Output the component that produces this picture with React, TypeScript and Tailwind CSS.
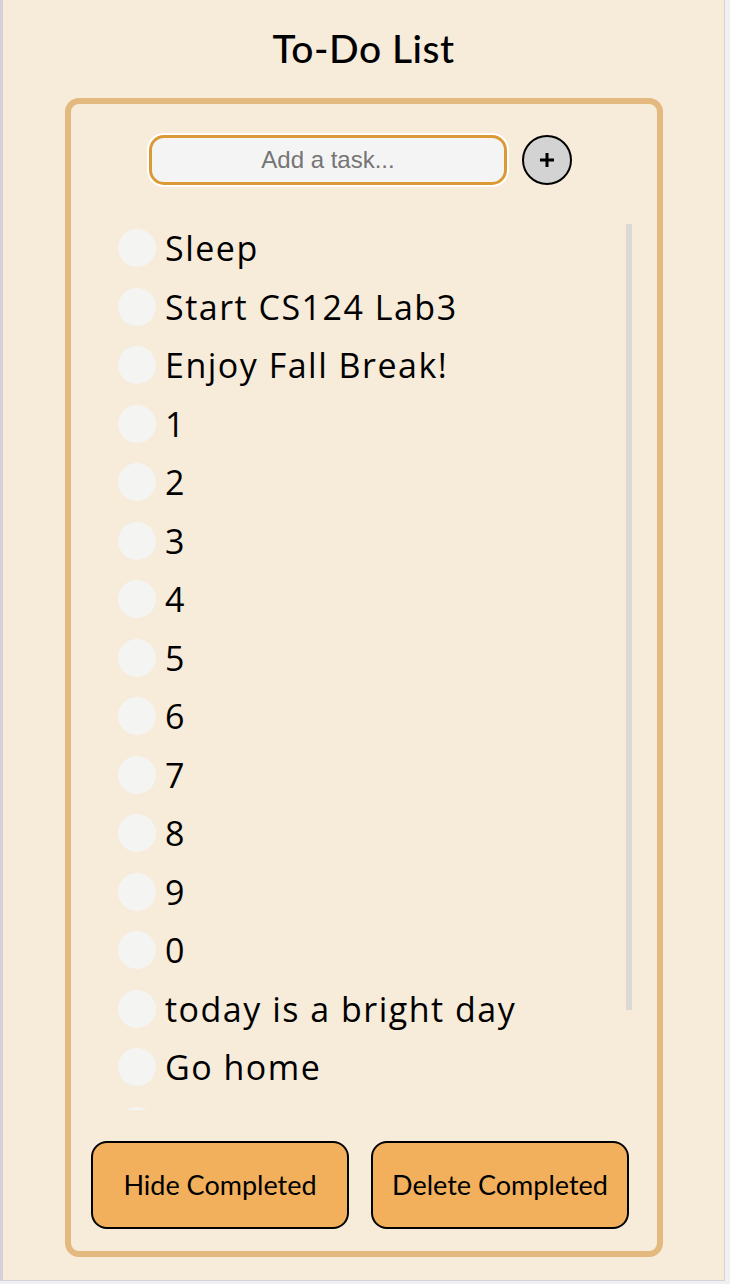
import { useState } from 'react'

type Task = {
  id: number
  text: string
  done: boolean
}

const initialTasks: Task[] = [
  'Sleep',
  'Start CS124 Lab3',
  'Enjoy Fall Break!',
  '1',
  '2',
  '3',
  '4',
  '5',
  '6',
  '7',
  '8',
  '9',
  '0',
  'today is a bright day',
  'Go home',
  'Call mom',
].map((text, i) => ({ id: i, text, done: false }))

export default function App() {
  const [tasks, setTasks] = useState<Task[]>(initialTasks)
  const [draft, setDraft] = useState('')
  const [hideDone, setHideDone] = useState(false)

  const addTask = () => {
    if (!draft.trim()) return
    setTasks([...tasks, { id: Date.now(), text: draft.trim(), done: false }])
    setDraft('')
  }

  const toggle = (id: number) => {
    setTasks(tasks.map((t) => (t.id === id ? { ...t, done: !t.done } : t)))
  }

  const visible = hideDone ? tasks.filter((t) => !t.done) : tasks

  return (
    <div className="w-[730px] h-[1284px] bg-[#f0f0f0]">
      <div className="w-[725px] h-[1281px] bg-[#f7ebda] border-l-[3px] border-r border-b border-[#d3d1d9] font-['Lato',sans-serif] text-black">
        <h1 className="pt-[25px] text-center text-[39px] leading-[46px] font-medium tracking-[0.5px]">
          To-Do List
        </h1>

        <div className="mt-[27px] ml-[62px] w-[598px] h-[1159px] border-[6px] border-[#e4b97f] rounded-[14px] flex flex-col">
          {/* input row */}
          <div className="mt-[31px] pr-[7px] flex items-center justify-center gap-[15px]">
            <input
              autoFocus
              value={draft}
              onChange={(e) => setDraft(e.target.value)}
              onKeyDown={(e) => e.key === 'Enter' && addTask()}
              placeholder="Add a task..."
              className="w-[358px] h-[50px] bg-[#f4f4f4] border-[3px] border-[#dc9a37] rounded-[15px] ring-2 ring-white outline-none text-center text-[24px] font-['Liberation_Sans',Arial,sans-serif] placeholder:text-[#757575] caret-black"
            />
            <button
              onClick={addTask}
              className="w-[50px] h-[50px] rounded-full border-2 border-black bg-[#d3d3d3] flex items-center justify-center"
            >
              <svg width="16" height="16" viewBox="0 0 16 16">
                <path d="M1 8h14M8 1v14" stroke="black" strokeWidth="3" />
              </svg>
            </button>
          </div>

          {/* task list */}
          <div className="relative mt-[34px] ml-[25px] w-[536px] h-[891px]">
            <div className="h-full overflow-y-auto font-['Open_Sans',sans-serif]">
              {visible.map((t) => (
                <div key={t.id} className="h-[58.5px] pl-[22px] flex items-center gap-[9px]">
                  <button
                    onClick={() => toggle(t.id)}
                    className={
                      t.done
                        ? 'w-[38px] h-[38px] shrink-0 rounded-full bg-[#f2b05c]'
                        : 'w-[38px] h-[38px] shrink-0 rounded-full bg-[#f4f4f3]'
                    }
                  />
                  <span
                    className={
                      t.done
                        ? 'text-[34px] leading-none tracking-[1.5px] whitespace-nowrap line-through'
                        : 'text-[34px] leading-none tracking-[1.5px] whitespace-nowrap'
                    }
                  >
                    {t.text}
                  </span>
                </div>
              ))}
            </div>
            {/* scroll thumb */}
            <div className="absolute right-0 top-[5px] w-[6px] h-[786px] bg-[#dcd9d3]" />
          </div>

          {/* bottom buttons */}
          <div className="mt-[31px] pl-[20px] flex gap-[22px]">
            <button
              onClick={() => setHideDone(!hideDone)}
              className="w-[258px] h-[88px] rounded-[16px] border-2 border-black bg-[#f2b05c] text-[27px] leading-[32px]"
            >
              {hideDone ? 'Show Completed' : 'Hide Completed'}
            </button>
            <button
              onClick={() => setTasks(tasks.filter((t) => !t.done))}
              className="w-[258px] h-[88px] rounded-[16px] border-2 border-black bg-[#f2b05c] text-[27px] leading-[32px]"
            >
              Delete Completed
            </button>
          </div>
        </div>
      </div>
    </div>
  )
}
